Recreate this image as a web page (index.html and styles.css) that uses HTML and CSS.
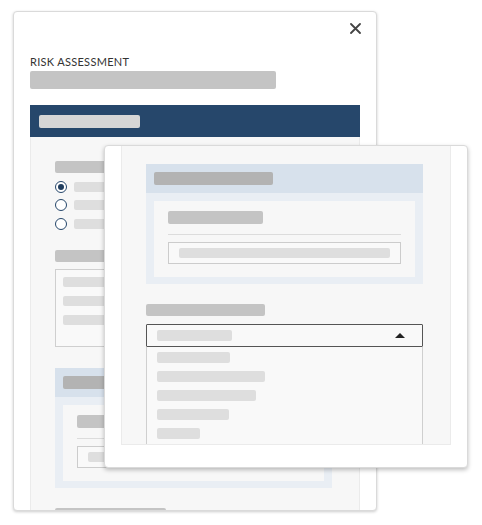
FILE: index.html
```html
<!DOCTYPE html>
<html lang="en">
<head>
<meta charset="utf-8">
<title>Risk Assessment</title>
<link rel="stylesheet" href="styles.css">
</head>
<body>
<div class="desk">
  <section class="win win-back">
    <div class="close-row">
      <svg class="close" viewBox="0 0 11 11" aria-label="Close"><path d="M1 1L10 10M10 1L1 10" stroke="#444" stroke-width="1.8" stroke-linecap="round"/></svg>
    </div>
    <h1 class="title">RISK ASSESSMENT</h1>
    <div class="bar bar-sub"></div>
    <div class="band"><div class="bar band-bar"></div></div>
    <div class="panel panel-back">
      <div class="bar label-bar"></div>
      <div class="radios">
        <div class="radio-row"><span class="radio checked"></span><span class="bar opt-bar"></span></div>
        <div class="radio-row"><span class="radio"></span><span class="bar opt-bar"></span></div>
        <div class="radio-row"><span class="radio"></span><span class="bar opt-bar"></span></div>
      </div>
      <div class="bar label-bar label-gap"></div>
      <div class="textarea">
        <div class="bar text-bar"></div>
        <div class="bar text-bar"></div>
        <div class="bar text-bar"></div>
      </div>
      <div class="section section-back">
        <div class="section-head"><div class="bar head-bar"></div></div>
        <div class="section-body">
          <div class="bar field-label"></div>
          <div class="divider"></div>
          <div class="input"><div class="bar input-bar"></div></div>
        </div>
      </div>
      <div class="bar label-bar label-gap bottom-bar"></div>
    </div>
  </section>

  <section class="win win-front">
    <div class="panel panel-front">
      <div class="section">
        <div class="section-head"><div class="bar head-bar"></div></div>
        <div class="section-body">
          <div class="bar field-label"></div>
          <div class="divider"></div>
          <div class="input"><div class="bar input-bar"></div></div>
        </div>
      </div>
      <div class="bar label-bar label-gap"></div>
      <div class="select">
        <div class="bar select-bar"></div>
        <svg class="caret" viewBox="0 0 10 5"><polygon points="0,5 5,0 10,5" fill="#222"/></svg>
      </div>
      <div class="list">
        <div class="bar item-bar w73"></div>
        <div class="bar item-bar w108"></div>
        <div class="bar item-bar w99"></div>
        <div class="bar item-bar w72"></div>
        <div class="bar item-bar w43"></div>
      </div>
    </div>
  </section>
</div>
</body>
</html>
```

FILE: styles.css
```css
html, body {
  margin: 0;
  background: #ffffff;
  font-family: Lato, "Liberation Sans", sans-serif;
}

.desk {
  position: relative;
  width: 482px;
  height: 525px;
  overflow: hidden;
}

.win {
  background: #ffffff;
  border: 1px solid #dadada;
  border-radius: 4px;
  box-shadow: 0 1px 3px rgba(0, 0, 0, 0.2);
  box-sizing: border-box;
  width: 364px;
}

.bar {
  border-radius: 2px;
}

/* Back window */
.win-back {
  margin: 11px 0 0 13px;
  height: 500px;
  padding: 0 16px;
  overflow: hidden;
  display: flow-root;
}

.close-row {
  display: flex;
  justify-content: flex-end;
  padding-top: 11px;
}

.close {
  display: block;
  width: 11px;
  height: 11px;
  margin-right: -1px;
}

.title {
  margin: 21px 0 0;
  font-size: 11px;
  line-height: 13px;
  font-weight: 400;
  letter-spacing: 0.3px;
  color: #333333;
}

.bar-sub {
  margin-top: 3px;
  width: 246px;
  height: 18px;
  background: #c4c4c4;
}

.band {
  margin-top: 16px;
  height: 32px;
  box-sizing: border-box;
  padding: 10px 9px;
  background: #26476b;
}

.band-bar {
  width: 101px;
  height: 13px;
  background: #d6d6d6;
}

.panel {
  background: #f7f7f7;
  border: 1px solid #ebebeb;
  border-top: none;
  padding-left: 24px;
  padding-right: 27px;
}

.panel-back {
  padding-top: 24px;
  padding-bottom: 20px;
  display: flow-root;
}

.label-bar {
  width: 119px;
  height: 12px;
  background: #c4c4c4;
}

.label-gap {
  margin-top: 20px;
}

.radios {
  margin-top: 7.5px;
  display: flex;
  flex-direction: column;
  gap: 6.5px;
}

.radio-row {
  display: flex;
  align-items: center;
  gap: 7px;
  height: 12px;
}

.radio {
  width: 12px;
  height: 12px;
  box-sizing: border-box;
  border: 1.5px solid #26476b;
  border-radius: 50%;
  background: #ffffff;
  display: flex;
  align-items: center;
  justify-content: center;
}

.radio.checked::after {
  content: "";
  width: 6px;
  height: 6px;
  border-radius: 50%;
  background: #1f3d5e;
}

.opt-bar {
  width: 120px;
  height: 10px;
  background: #dedede;
}

.textarea {
  margin-top: 7px;
  height: 78px;
  box-sizing: border-box;
  border: 1px solid #cfcfcf;
  background: #f9f9f9;
  padding: 7px;
  display: flex;
  flex-direction: column;
  gap: 9px;
}

.text-bar {
  width: 200px;
  height: 10px;
  background: #dedede;
}

/* Section component */
.section {
  display: flow-root;
  background: #e9eef4;
  padding-bottom: 7px;
}

.section-back {
  margin-top: 21px;
}

.section-head {
  padding: 8px;
  background: #d7e1ec;
}

.head-bar {
  width: 119px;
  height: 13px;
  background: #b3b3b3;
}

.section-body {
  margin: 8px 8px 0;
  background: #f7f7f7;
  padding: 10px 14px 13px;
}

.field-label {
  width: 95px;
  height: 13px;
  background: #c4c4c4;
}

.divider {
  margin-top: 10px;
  height: 1px;
  background: #dcdcdc;
}

.input {
  margin-top: 7px;
  height: 22px;
  box-sizing: border-box;
  border: 1px solid #cccccc;
  background: #f9f9f9;
  padding: 5px 10px;
}

.input-bar {
  height: 10px;
  background: #dedede;
}

.bottom-bar {
  width: 111px;
}

/* Front window */
.win-front {
  position: absolute;
  left: 104px;
  top: 145px;
  padding: 0 16px 22px;
  box-shadow: 0 2px 4px rgba(0, 0, 0, 0.25);
}

.panel-front {
  height: 299px;
  box-sizing: border-box;
  padding-top: 18px;
  overflow: hidden;
}

.select {
  margin-top: 8px;
  height: 23px;
  box-sizing: border-box;
  border: 1px solid #555555;
  border-radius: 1px;
  background: #f9f9f9;
  display: flex;
  align-items: center;
  justify-content: space-between;
  padding: 0 17px 0 10px;
}

.select-bar {
  width: 75px;
  height: 11px;
  background: #dedede;
}

.caret {
  display: block;
  width: 10px;
  height: 5px;
}

.list {
  border: 1px solid #cfcfcf;
  border-top: none;
  background: #f9f9f9;
  padding: 5px 10px;
  display: flex;
  flex-direction: column;
  gap: 8px;
}

.item-bar {
  height: 11px;
  background: #dedede;
}

.w73 { width: 73px; }
.w108 { width: 108px; }
.w99 { width: 99px; }
.w72 { width: 72px; }
.w43 { width: 43px; }
```
